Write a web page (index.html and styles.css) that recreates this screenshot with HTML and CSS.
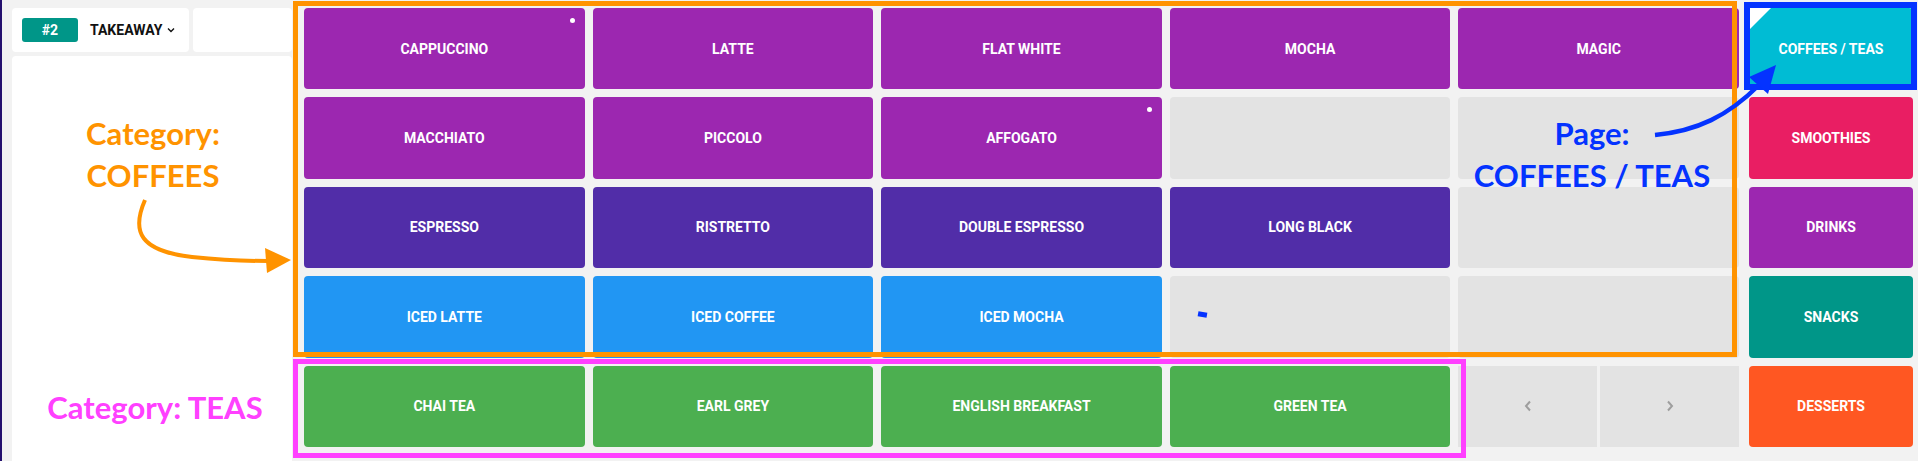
FILE: index.html
```html
<!DOCTYPE html>
<html lang="en">

<head>
    <meta charset="UTF-8">
    <meta name="viewport" content="width=device-width, initial-scale=1.0">
    <title>POS - Menu pages</title>
    <link rel="stylesheet" href="styles.css">
</head>

<body>
    <div id="app">
        <div class="edge"></div>

        <div class="order">
            <div class="order-top">
                <div class="ticket">
                    <span class="ticket-no">#2</span>
                    <span class="ticket-type">TAKEAWAY
                        <svg width="8" height="6" viewBox="0 0 8 6"><path d="M1 1.5 L4 4.5 L7 1.5" fill="none" stroke="#111" stroke-width="1.4"/></svg>
                    </span>
                </div>
                <div class="order-extra"></div>
            </div>
            <div class="order-body"></div>
        </div>

        <div class="menu">
            <div class="tile purple">CAPPUCCINO<i class="dot"></i></div>
            <div class="tile purple">LATTE</div>
            <div class="tile purple">FLAT WHITE</div>
            <div class="tile purple">MOCHA</div>
            <div class="tile purple">MAGIC</div>

            <div class="tile purple">MACCHIATO</div>
            <div class="tile purple">PICCOLO</div>
            <div class="tile purple">AFFOGATO<i class="dot"></i></div>
            <div class="tile empty"></div>
            <div class="tile empty"></div>

            <div class="tile indigo">ESPRESSO</div>
            <div class="tile indigo">RISTRETTO</div>
            <div class="tile indigo">DOUBLE ESPRESSO</div>
            <div class="tile indigo">LONG BLACK</div>
            <div class="tile empty"></div>

            <div class="tile blue">ICED LATTE</div>
            <div class="tile blue">ICED COFFEE</div>
            <div class="tile blue">ICED MOCHA</div>
            <div class="tile empty"></div>
            <div class="tile empty"></div>

            <div class="tile green">CHAI TEA</div>
            <div class="tile green">EARL GREY</div>
            <div class="tile green">ENGLISH BREAKFAST</div>
            <div class="tile green">GREEN TEA</div>
            <div class="pager">
                <div class="page-btn">
                    <svg width="8" height="12" viewBox="0 0 8 12"><path d="M6 1.5 L2 6 L6 10.5" fill="none" stroke="#9e9e9e" stroke-width="2"/></svg>
                </div>
                <div class="page-btn">
                    <svg width="8" height="12" viewBox="0 0 8 12"><path d="M2 1.5 L6 6 L2 10.5" fill="none" stroke="#9e9e9e" stroke-width="2"/></svg>
                </div>
            </div>
        </div>

        <div class="cats">
            <div class="tile cyan active">COFFEES / TEAS</div>
            <div class="tile pink">SMOOTHIES</div>
            <div class="tile purple">DRINKS</div>
            <div class="tile teal">SNACKS</div>
            <div class="tile orange">DESSERTS</div>
        </div>

        <!-- annotations drawn over the screenshot -->
        <div class="mark mark-coffees"></div>
        <div class="mark mark-teas"></div>
        <div class="mark mark-page"></div>
        <div class="stray"></div>

        <div class="note note-coffees">Category:<br>COFFEES</div>
        <div class="note note-teas">Category: TEAS</div>
        <div class="note note-page">Page:<br>COFFEES / TEAS</div>

        <svg class="arrows" width="1918" height="461" viewBox="0 0 1918 461">
            <path d="M145 200 C131 232 140 251 192 257 C222 260 246 261 268 261" fill="none" stroke="#ff9300" stroke-width="4"/>
            <polygon points="265,248 291,260 267,273" fill="#ff9300"/>
            <path d="M1655 135 C1697 131 1728 116 1759 85" fill="none" stroke="#0433ff" stroke-width="4.5"/>
            <polygon points="1749,77 1776,65 1768,94" fill="#0433ff"/>
        </svg>
    </div>
</body>

</html>
```

FILE: styles.css
```css
* {
    margin: 0;
    padding: 0;
    box-sizing: border-box;
}

body {
    background: #f2f2f2;
    font-family: Roboto, "Liberation Sans", sans-serif;
    overflow: hidden;
}

#app {
    position: relative;
    display: flex;
    width: 1918px;
    height: 461px;
}

.edge {
    width: 2px;
    background: #24106e;
}

/* order panel */
.order {
    width: 280px;
    margin-left: 10px;
    padding-top: 8px;
    display: flex;
    flex-direction: column;
    gap: 4px;
}

.order-top {
    height: 44px;
    display: flex;
    gap: 4px;
}

.ticket {
    width: 177px;
    background: #fff;
    border-radius: 4px;
    display: flex;
    align-items: center;
    padding-left: 10px;
    gap: 12px;
}

.ticket-no {
    width: 56px;
    height: 24px;
    border-radius: 3px;
    background: #009688;
    color: #fff;
    font-size: 14px;
    font-weight: 700;
    display: flex;
    align-items: center;
    justify-content: center;
}

.ticket-type {
    display: flex;
    align-items: center;
    gap: 5px;
    font-size: 14px;
    font-weight: 700;
    color: #111;
}

.order-extra {
    flex: 1;
    background: #fff;
    border-radius: 4px;
}

.order-body {
    flex: 1;
    background: #fff;
    border-radius: 4px 4px 0 0;
}

/* menu grid */
.menu {
    width: 1435px;
    height: 439px;
    margin-left: 12px;
    margin-top: 8px;
    display: grid;
    grid-template-columns: repeat(5, 1fr);
    grid-template-rows: repeat(5, 1fr);
    gap: 8px;
}

.tile {
    position: relative;
    border-radius: 4px;
    color: #fff;
    font-size: 14px;
    font-weight: 700;
    display: flex;
    align-items: center;
    justify-content: center;
}

.tile .dot {
    position: absolute;
    top: 10px;
    right: 10px;
    width: 5px;
    height: 5px;
    border-radius: 50%;
    background: #fff;
}

.purple { background: #9c27b0; }
.indigo { background: #512da8; }
.blue { background: #2196f3; }
.green { background: #4caf50; }
.cyan { background: #00bcd4; }
.pink { background: #e91e63; }
.teal { background: #009688; }
.orange { background: #ff5722; }
.empty { background: #e3e3e3; }

.pager {
    display: flex;
    gap: 3px;
}

.page-btn {
    flex: 1;
    background: #e3e3e3;
    display: flex;
    align-items: center;
    justify-content: center;
}

/* category column */
.cats {
    width: 164px;
    height: 439px;
    margin-left: 10px;
    margin-top: 8px;
    display: grid;
    grid-template-rows: repeat(5, 1fr);
    gap: 8px;
}

.cats .active::before {
    content: "";
    position: absolute;
    top: 0;
    left: 0;
    border-top: 22px solid #fff;
    border-right: 22px solid transparent;
}

/* annotations */
.mark {
    position: absolute;
    border: 5px solid;
}

.mark-coffees {
    left: 293px;
    top: 1px;
    width: 1444px;
    height: 356px;
    border-color: #ff9300;
}

.mark-teas {
    left: 293px;
    top: 359px;
    width: 1173px;
    height: 99px;
    border-color: #ff40ff;
}

.mark-page {
    left: 1744px;
    top: 2px;
    width: 173px;
    height: 88px;
    border-width: 6px;
    border-color: #0433ff;
}

.stray {
    position: absolute;
    left: 1198px;
    top: 312px;
    width: 9px;
    height: 5px;
    background: #0433ff;
    transform: rotate(10deg);
}

.note {
    position: absolute;
    font-family: Lato, "Open Sans", sans-serif;
    font-weight: 700;
    font-size: 31px;
    line-height: 42px;
    text-align: center;
    white-space: nowrap;
}

.note-coffees {
    left: 43px;
    top: 112px;
    width: 220px;
    color: #ff9300;
}

.note-teas {
    left: 30px;
    top: 386px;
    width: 250px;
    color: #ff40ff;
}

.note-page {
    left: 1467px;
    top: 112px;
    width: 250px;
    color: #0433ff;
}

.arrows {
    position: absolute;
    left: 0;
    top: 0;
    pointer-events: none;
}
```
